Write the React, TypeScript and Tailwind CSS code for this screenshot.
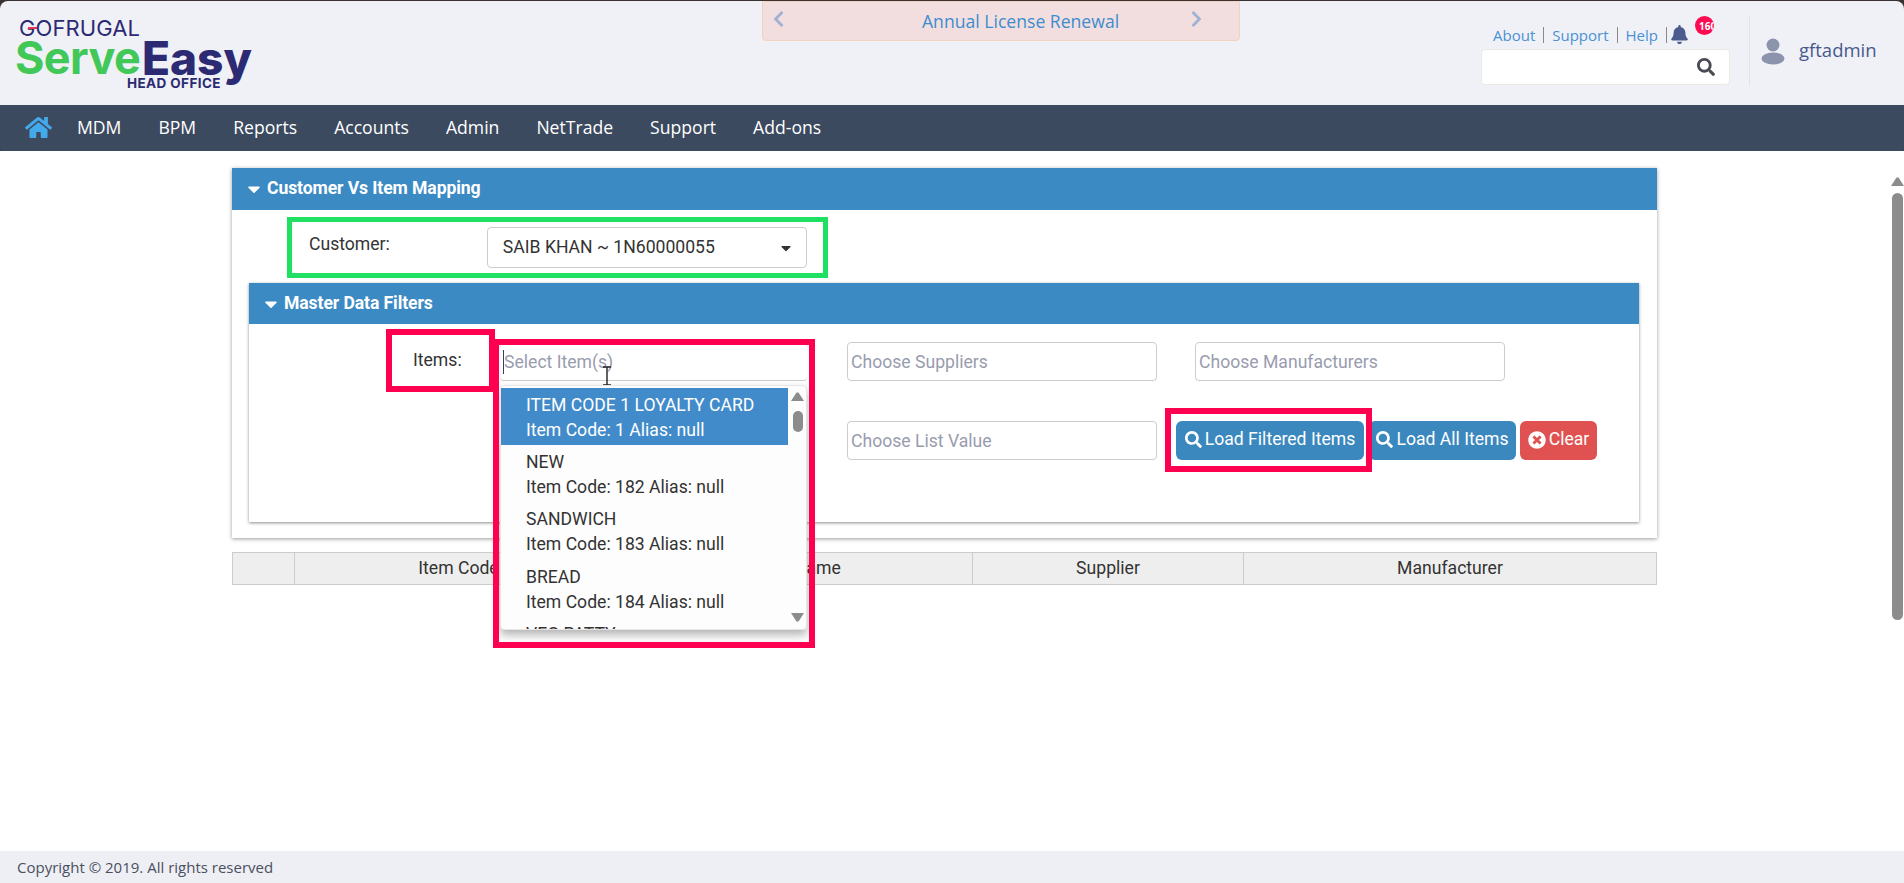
import { FaBell, FaCaretDown, FaChevronLeft, FaChevronRight, FaHome, FaSearch, FaTimesCircle } from "react-icons/fa";

const navItems = ["MDM", "BPM", "Reports", "Accounts", "Admin", "NetTrade", "Support", "Add-ons"];

const dropdownItems = [
  { name: "ITEM CODE 1 LOYALTY CARD", code: "Item Code: 1 Alias: null" },
  { name: "NEW", code: "Item Code: 182 Alias: null" },
  { name: "SANDWICH", code: "Item Code: 183 Alias: null" },
  { name: "BREAD", code: "Item Code: 184 Alias: null" },
  { name: "VEG PATTY", code: "Item Code: 185 Alias: null" },
];

const tableCols = [
  { label: "", w: "w-[62px]" },
  { label: "Item Code", w: "w-[328px]" },
  { label: "Item Name", w: "w-[350px]" },
  { label: "Supplier", w: "w-[271px]" },
  { label: "Manufacturer", w: "flex-1" },
];

// Logo is plain text, the original is an image
const Logo = () => (
  <div className="relative h-[104px] w-[762px] shrink-0">
    <span className="absolute left-[19px] top-[14px] font-['Inter',sans-serif] text-[22px] leading-[26px] tracking-[0.1px] text-[#2c2a72]">
      GOFRUGAL
    </span>
    <span className="absolute left-[28px] top-[26px] h-[2px] w-[9px] bg-[#e8344e]" />
    <span className="absolute left-[15px] top-[32px] font-['Inter',sans-serif] text-[45px] font-bold leading-[50px] tracking-[-0.6px] text-[#41c858]">
      Serve
    </span>
    <span className="absolute left-[142px] top-[32px] font-['Inter',sans-serif] text-[46px] font-extrabold leading-[50px] text-[#2c2a72]">
      Easy
    </span>
    <span className="absolute left-[127px] top-[75px] font-['Inter',sans-serif] text-[13.5px] font-bold leading-[14px] tracking-[0.4px] text-[#2c2a72]">
      HEAD OFFICE
    </span>
  </div>
);

const UserIcon = () => (
  <svg width="24" height="28" viewBox="0 0 24 28" fill="#8c93ad">
    <circle cx="12" cy="8" r="6.5" />
    <ellipse cx="12" cy="21.5" rx="11.5" ry="6" />
  </svg>
);

const Triangle = ({ down = false }: { down?: boolean }) => (
  <svg width="13" height="9" viewBox="0 0 13 9" fill="#8c8c8c">
    <path d={down ? "M0 0h13L7.5 8.5h-2z" : "M0 9h13L7.5.5h-2z"} />
  </svg>
);

const PanelHeader = ({ title, h }: { title: string; h: string }) => (
  <div className={`flex items-center bg-[#3b8ac4] pl-[12px] text-white ${h}`}>
    <FaCaretDown className="mr-[3px] text-[20px]" />
    <span className="mb-[1px] font-['Roboto',sans-serif] text-[17.6px] font-bold tracking-[-0.1px]">{title}</span>
  </div>
);

const FakeInput = ({ text, w }: { text?: string; w: string }) => (
  <div className={`flex h-[39px] items-center rounded-[4px] border border-[#cccccc] bg-white pl-[3px] pt-[2px] text-[17.6px] text-[#999cae] ${w}`}>
    {text}
  </div>
);

export default function App() {
  return (
    <div className="relative flex h-[883px] w-[1904px] flex-col overflow-hidden bg-[#3a3232] pt-[1px] font-['Roboto',sans-serif] text-[#333333]">
      {/* header */}
      <header className="flex h-[104px] shrink-0 rounded-t-[8px] bg-[#f0f1f7]">
        <Logo />
        <div className="flex h-[40px] w-[478px] items-center rounded-b-[4px] border border-[#f3d3bd] bg-[#f2dede] pl-[9px] font-['Open_Sans',sans-serif]">
          <FaChevronLeft className="-mt-[4px] w-[13px] text-[18px] text-[#9fb2d3]" />
          <span className="ml-[137px] w-[195px] whitespace-nowrap text-[17.6px] text-[#3c8dcf]">Annual License Renewal</span>
          <FaChevronRight className="-mt-[4px] ml-[73px] w-[13px] text-[18px] text-[#9fb2d3]" />
        </div>
        <div className="ml-[241px] w-[249px] shrink-0 pt-[15px]">
          <div className="relative flex h-[33px] items-end pb-[4px] pl-[12px] font-['Open_Sans',sans-serif] text-[15px] leading-[20px] text-[#4a90d2]">
            <span>About</span>
            <span className="mx-[8px] mb-[2px] h-[16px] w-px bg-[#888888]" />
            <span>Support</span>
            <span className="mx-[8px] mb-[2px] h-[16px] w-px bg-[#888888]" />
            <span>Help</span>
            <span className="mx-[8px] mb-[2px] h-[16px] w-px bg-[#888888]" />
            <FaBell className="-ml-[5px] mb-[1px] text-[19px] text-[#4b5b8e]" />
            <span className="absolute left-[214px] top-0 flex h-[19px] w-[19px] items-center overflow-hidden rounded-full bg-[#ff0a50] pl-[4px] text-[10px] font-bold text-white">
              160
            </span>
          </div>
          <div className="flex h-[36px] items-center justify-end rounded-[4px] border border-[#ece8e4] bg-white pr-[14px] text-[18px] text-[#4a4a55]">
            <FaSearch />
          </div>
        </div>
        <div className="ml-[19px] mt-[15px] flex h-[70px] flex-1 items-center border-l border-[#e2e3e8] pl-[11px]">
          <UserIcon />
          <span className="mb-[3px] ml-[14px] font-['Open_Sans',sans-serif] text-[18.5px] text-[#47598e]">gftadmin</span>
        </div>
      </header>

      {/* nav */}
      <nav className="flex h-[46px] shrink-0 items-center gap-[37px] rounded-b-[2px] bg-[#3c4a60] pb-[2px] pl-[25px] font-['Open_Sans',sans-serif] text-[17.6px] text-white">
        <FaHome className="-mr-[12px] text-[27px] text-[#44a9ea]" />
        {navItems.map((item) => (
          <span key={item}>{item}</span>
        ))}
      </nav>

      {/* page body */}
      <main className="flex flex-1 flex-col bg-white">
        <div className="ml-[232px] mt-[17px] w-[1425px]">
          <section className="h-[370px] bg-white shadow-[0_1px_4px_rgba(0,0,0,0.4)]">
            <PanelHeader title="Customer Vs Item Mapping" h="h-[42px]" />
            <div className="flex h-[73px] items-start">
              <span className="ml-[77px] mt-[21px] text-[17.6px]">Customer:</span>
              <div className="ml-[97px] mt-[17px] flex h-[41px] w-[320px] items-center justify-between rounded-[4px] border border-[#cccccc] bg-white pl-[15px] pr-[12px] text-[17.6px]">
                <span>SAIB KHAN ~ 1N60000055</span>
                <FaCaretDown className="text-[16px]" />
              </div>
            </div>
            <section className="ml-[17px] h-[239px] w-[1390px] bg-white shadow-[0_1px_3px_rgba(0,0,0,0.45)]">
              <PanelHeader title="Master Data Filters" h="h-[41px]" />
              <div className="flex pt-[18px]">
                <span className="ml-[164px] mt-[5px] w-[87px] shrink-0 text-[17.6px]">Items:</span>
                <FakeInput w="w-[307px]" />
                <FakeInput text="Choose Suppliers" w="ml-[40px] w-[310px]" />
                <FakeInput text="Choose Manufacturers" w="ml-[38px] w-[310px]" />
              </div>
              <div className="flex pl-[251px] pt-[40px]">
                <FakeInput w="w-[307px]" />
                <FakeInput text="Choose List Value" w="ml-[40px] w-[310px]" />
                <button className="ml-[19px] flex h-[39px] w-[188px] items-center justify-center gap-[3px] rounded-[6px] bg-[#3a88be] pb-[2px] text-[17.6px] text-white">
                  <FaSearch className="text-[17px]" />
                  Load Filtered Items
                </button>
                <button className="ml-[5px] flex h-[39px] w-[147px] items-center justify-center gap-[3px] rounded-[6px] bg-[#3a88be] pb-[2px] text-[17.6px] text-white">
                  <FaSearch className="text-[17px]" />
                  Load All Items
                </button>
                <button className="ml-[4px] flex h-[39px] w-[77px] items-center justify-center gap-[3px] rounded-[6px] bg-[#e05252] pb-[2px] text-[17.6px] text-white">
                  <FaTimesCircle className="text-[18px]" />
                  Clear
                </button>
              </div>
            </section>
          </section>

          {/* empty grid header */}
          <div className="mt-[14px] flex h-[33px] border border-[#cccccc] bg-[#eeeeee] text-[17.6px]">
            {tableCols.map((col, i) => (
              <div
                key={i}
                className={`flex items-center justify-center border-r border-[#cccccc] last:border-r-0 ${col.w}`}
              >
                {col.label}
              </div>
            ))}
          </div>
        </div>

        <footer className="mt-auto flex h-[32px] items-center bg-[#eeeff4] pl-[17px] font-['Open_Sans',sans-serif] text-[15px] text-[#4a5060]">
          Copyright © 2019. All rights reserved
        </footer>
      </main>

      {/* page scrollbar */}
      <div className="absolute left-[1890px] top-[177px] flex w-[14px] flex-col items-center gap-[7px]">
        <Triangle />
        <div className="h-[427px] w-[11px] rounded-full bg-[#8c8c8c]" />
      </div>

      {/* open items dropdown, sits over the filter rows and the grid */}
      <div className="absolute left-[500px] top-[344px] h-[37px] w-[307px] rounded-[4px] border-b border-[#cccccc] bg-white pl-[4px] pt-[6px] text-[17.6px] leading-[24px] text-[#999cae]">
        <span className="absolute left-[3px] top-[6px] h-[24px] w-px bg-[#3c3c60]" />
        Select Item(s)
      </div>
      <svg className="absolute left-[602px] top-[366px]" width="10" height="20" viewBox="0 0 10 20" fill="none" stroke="#222" strokeWidth="1.4">
        <path d="M1 1h8M5 1v18M1 19h8" />
      </svg>
      <div className="absolute left-[500px] top-[385px] h-[245px] w-[307px] overflow-hidden rounded-[4px] border border-[#e6e6e6] bg-[#fdfdfd] pt-[2px] text-[17.6px] leading-[25px] shadow-[0_5px_10px_rgba(0,0,0,0.3)]">
        <div className="w-[287px]">
          {dropdownItems.map((item, i) => (
            <div
              key={item.name}
              className={`pl-[25px] pt-[5px] ${i === 0 ? "h-[56.5px] bg-[#428bca] text-white" : "h-[57.5px] text-[#333333]"}`}
            >
              <div>{item.name}</div>
              <div>{item.code}</div>
            </div>
          ))}
        </div>
        <div className="absolute right-[2px] top-[6px] flex h-[230px] w-[13px] flex-col items-center">
          <Triangle />
          <div className="mt-[10px] h-[21px] w-[10px] rounded-full bg-[#8c8c8c]" />
          <div className="mt-auto">
            <Triangle down />
          </div>
        </div>
      </div>

      {/* annotation boxes drawn on the screenshot */}
      <div className="absolute left-[287px] top-[217px] h-[61px] w-[541px] border-[5px] border-[#1fe060]" />
      <div className="absolute left-[386px] top-[329px] h-[63px] w-[109px] border-[6px] border-[#ff0050]" />
      <div className="absolute left-[493px] top-[339px] h-[309px] w-[322px] border-[6px] border-[#ff0050]" />
      <div className="absolute left-[1165px] top-[408px] h-[64px] w-[207px] border-[6px] border-[#ff0050]" />
    </div>
  );
}
